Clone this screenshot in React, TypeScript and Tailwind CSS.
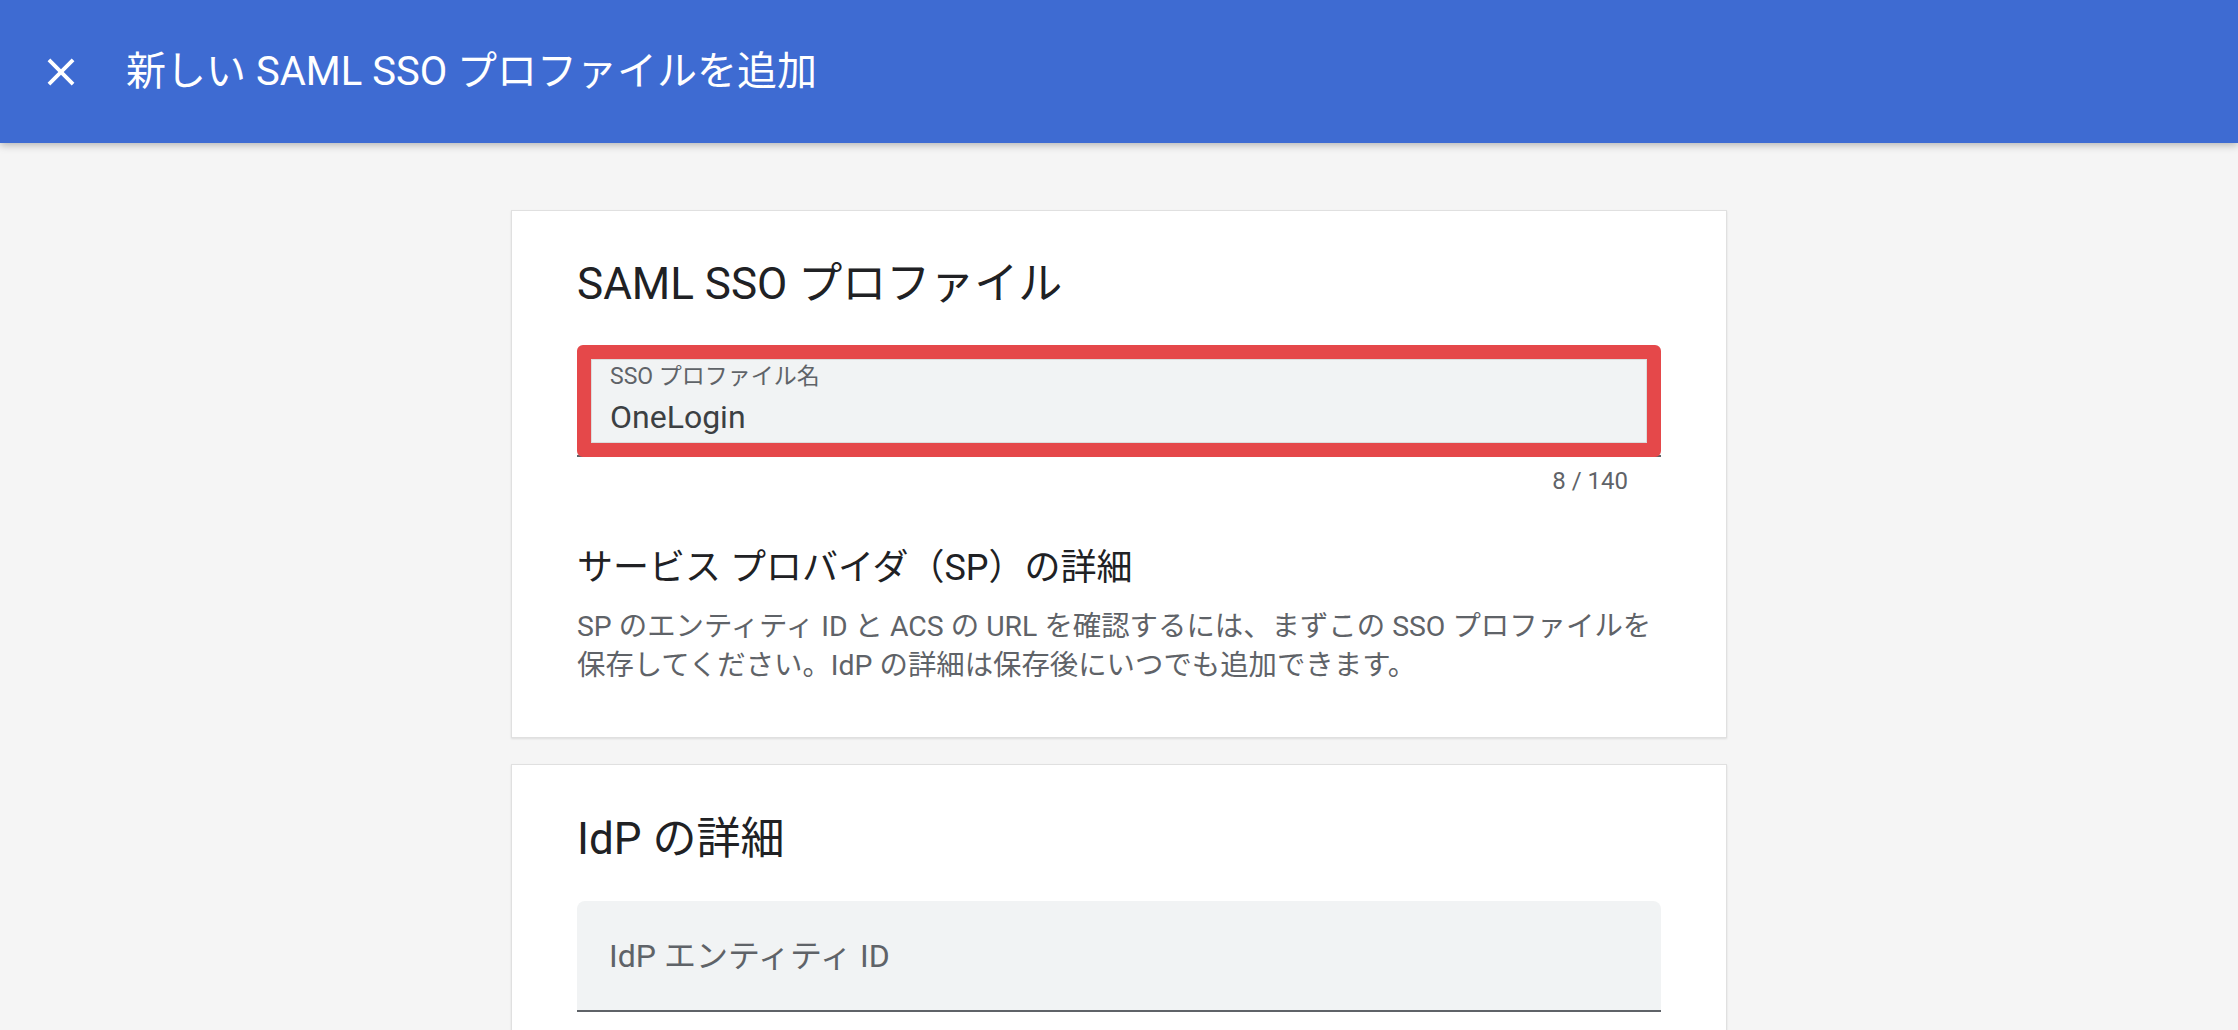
import React from "react";

export default function App() {
  return (
    <div
      className="min-h-screen bg-[#f5f5f5]"
      style={{ fontFamily: "Roboto, 'Noto Sans CJK JP', sans-serif" }}
    >
      <header className="relative z-10 flex h-[143px] items-center bg-[#3e6bd2] pl-[38px] shadow-[0_2px_8px_rgba(0,0,0,0.28)]">
        <svg width="46" height="46" viewBox="0 0 24 24" fill="white" aria-hidden="true">
          <path d="M19 6.41 17.59 5 12 10.59 6.41 5 5 6.41 10.59 12 5 17.59 6.41 19 12 13.41 17.59 19 19 17.59 13.41 12z" />
        </svg>
        <h1 className="ml-[42px] text-[40px] font-normal leading-none text-white">
          新しい SAML SSO プロファイルを追加
        </h1>
      </header>

      <main className="mx-auto flex w-[1216px] flex-col gap-[26px] pt-[67px]">
        <section className="border border-[#e0e0e0] bg-white px-[65px] pb-[52px] pt-[45px] shadow-[0_1px_2px_rgba(0,0,0,0.1)]">
          <h2 className="text-[44px] font-normal leading-[56px] text-[#202124]">
            SAML SSO プロファイル
          </h2>

          <div className="relative mt-[33px] h-[112px] rounded-t-[6px] border-b-2 border-[#5f6368] bg-[#f1f3f4] px-[33px] pt-[10px]">
            <div className="text-[23px] leading-[44px] text-[#5f6368]">SSO プロファイル名</div>
            <div className="text-[32px] leading-[36px] text-[#3c4043]">OneLogin</div>
            <div className="pointer-events-none absolute -bottom-[2px] left-0 right-0 top-0 rounded-[6px] border-[14px] border-[#e5484a]">
              <div className="h-full w-full border border-[#dcdcdc]" />
            </div>
          </div>

          <div className="mt-[8px] pr-[33px] text-right text-[24px] leading-[32px] text-[#5f6368]">
            8 / 140
          </div>

          <h3 className="mt-[47px] text-[36px] font-normal leading-[48px] text-[#202124]">
            サービス プロバイダ（SP）の詳細
          </h3>
          <p className="mt-[15px] text-[28.4px] leading-[39px] text-[#5f6368]">
            <span className="block whitespace-nowrap">
              SP のエンティティ ID と ACS の URL を確認するには、まずこの SSO プロファイルを
            </span>
            <span className="block whitespace-nowrap">
              保存してください。IdP の詳細は保存後にいつでも追加できます。
            </span>
          </p>
        </section>

        <section className="border border-[#e0e0e0] bg-white px-[65px] pb-[52px] pt-[46px] shadow-[0_1px_2px_rgba(0,0,0,0.1)]">
          <h2 className="text-[44px] font-normal leading-[56px] text-[#202124]">IdP の詳細</h2>
          <div className="mt-[34px] flex h-[111px] items-center rounded-t-[8px] border-b-2 border-[#5f6368] bg-[#f1f3f4] px-[32px]">
            <span className="text-[32px] text-[#5f6368]">IdP エンティティ ID</span>
          </div>
          <div className="h-[200px]" />
        </section>
      </main>
    </div>
  );
}
